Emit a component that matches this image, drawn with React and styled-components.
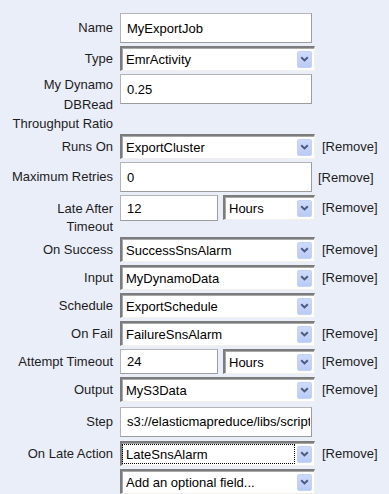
import styled, { createGlobalStyle } from 'styled-components';

const GlobalStyle = createGlobalStyle`
  html, body {
    margin: 0;
    padding: 0;
    background: #eaeef9;
  }
  body {
    font-family: 'Liberation Sans', Arial, sans-serif;
    font-size: 13px;
    color: #1c1c1c;
  }
`;

const Form = styled.div`
  width: 389px;
  height: 494px;
  box-sizing: border-box;
  padding-top: 13px;

  display: flex;
  flex-direction: column;
  gap: 3px;
  overflow: hidden;
`;

const Row = styled.div`
  display: flex;
  align-items: ${(p) => (p.$top ? 'flex-start' : 'center')};
  height: ${(p) => (p.$h ? `${p.$h}px` : 'auto')};
`;

const Label = styled.div`
  width: 113px;
  flex: none;
  box-sizing: border-box;
  text-align: right;
  line-height: ${(p) => p.$lh || 18}px;
  padding-top: ${(p) => p.$pt || 0}px;
`;

const Fields = styled.div`
  margin-left: 7px;
  display: flex;
  align-items: flex-start;
  gap: 5px;
`;

const TextInput = styled.input`
  width: ${(p) => p.$w}px;
  height: ${(p) => p.$hh || 30}px;
  box-sizing: border-box;
  margin: 0;
  padding: 0 1px 0 6px;

  border: 1px solid;
  border-color: #b4b4b4 #9c9c9c #9c9c9c #b4b4b4;
  background: #fff;

  font-family: 'Liberation Sans', Arial, sans-serif;
  font-size: 13px;
  color: #000;
  outline: none;
`;

const SelectBox = styled.div`
  width: ${(p) => p.$w}px;
  height: 25px;
  box-sizing: border-box;
  flex: none;

  display: flex;
  align-items: center;

  background: #fff;
  border-style: solid;
  border-width: 2px 1px 1px 2px;
  border-color: #7c7c7c #f1f0ea #f1f0ea #7c7c7c;
  box-shadow: inset 1px 1px 0 #a8a8a8;
`;

const Value = styled.div`
  flex: 1;
  height: 20px;
  box-sizing: border-box;
  margin-right: 2px;
  padding-left: 3px;

  display: flex;
  align-items: center;
  white-space: nowrap;
  overflow: hidden;

  color: #000;
  border: 1px dotted ${(p) => (p.$focused ? '#000' : 'transparent')};
`;

const ArrowButton = styled.div`
  width: 15px;
  height: 17px;
  box-sizing: border-box;
  margin-right: 2px;
  flex: none;

  display: flex;
  align-items: center;
  justify-content: center;

  background: linear-gradient(#cddafb, #b9cbf6);
  border: 1px solid #c3d2f6;
  border-radius: 2px;
`;

const Remove = styled.span`
  margin-left: ${(p) => p.$gap || 7}px;
  white-space: nowrap;
  color: #1c1c1c;
`;

function Chevron() {
  return (
    <svg width="9" height="6" viewBox="0 0 9 6">
      <path d="M1.2 1.2 L4.5 4.4 L7.8 1.2" fill="none" stroke="#4b5b7e" strokeWidth="2" />
    </svg>
  );
}

function Select({ value, w = 195, focused }) {
  return (
    <SelectBox $w={w}>
      <Value $focused={focused}>{value}</Value>
      <ArrowButton>
        <Chevron />
      </ArrowButton>
    </SelectBox>
  );
}

export default function App() {
  return (
    <>
      <GlobalStyle />
      <Form>
        <Row>
          <Label>Name</Label>
          <Fields>
            <TextInput $w={192} defaultValue="MyExportJob" />
          </Fields>
        </Row>

        <Row>
          <Label>Type</Label>
          <Fields>
            <Select value="EmrActivity" />
          </Fields>
        </Row>

        <Row $top $h={57}>
          <Label $lh={19.5} $pt={1}>
            My Dynamo DBRead Throughput Ratio
          </Label>
          <Fields>
            <TextInput $w={192} defaultValue="0.25" />
          </Fields>
        </Row>

        <Row>
          <Label>Runs On</Label>
          <Fields>
            <Select value="ExportCluster" />
          </Fields>
          <Remove>[Remove]</Remove>
        </Row>

        <Row>
          <Label>Maximum Retries</Label>
          <Fields>
            <TextInput $w={192} defaultValue="0" />
          </Fields>
          <Remove $gap={6}>[Remove]</Remove>
        </Row>

        <Row $top $h={39}>
          <Label $pt={5}>
            Late After
            <br />
            Timeout
          </Label>
          <Fields>
            <TextInput $w={98} $hh={26} defaultValue="12" />
            <Select w={92} value="Hours" />
          </Fields>
          <Remove $gap={7}>
            <RemoveLine>[Remove]</RemoveLine>
          </Remove>
        </Row>

        <Row>
          <Label>On Success</Label>
          <Fields>
            <Select value="SuccessSnsAlarm" />
          </Fields>
          <Remove>[Remove]</Remove>
        </Row>

        <Row>
          <Label>Input</Label>
          <Fields>
            <Select value="MyDynamoData" />
          </Fields>
          <Remove>[Remove]</Remove>
        </Row>

        <Row>
          <Label>Schedule</Label>
          <Fields>
            <Select value="ExportSchedule" />
          </Fields>
        </Row>

        <Row>
          <Label>On Fail</Label>
          <Fields>
            <Select value="FailureSnsAlarm" />
          </Fields>
          <Remove>[Remove]</Remove>
        </Row>

        <Row>
          <Label>Attempt Timeout</Label>
          <Fields>
            <TextInput $w={98} $hh={25} defaultValue="24" />
            <Select w={92} value="Hours" />
          </Fields>
          <Remove>[Remove]</Remove>
        </Row>

        <Row>
          <Label>Output</Label>
          <Fields>
            <Select value="MyS3Data" />
          </Fields>
          <Remove>[Remove]</Remove>
        </Row>

        <Row $h={33}>
          <Label>Step</Label>
          <Fields>
            <TextInput $w={192} defaultValue="s3://elasticmapreduce/libs/script-runner/script-runner.jar" />
          </Fields>
        </Row>

        <Row>
          <Label>On Late Action</Label>
          <Fields>
            <Select value="LateSnsAlarm" focused />
          </Fields>
          <Remove>[Remove]</Remove>
        </Row>

        <Row>
          <Label />
          <Fields>
            <Select value="Add an optional field..." />
          </Fields>
        </Row>
      </Form>
    </>
  );
}

const RemoveLine = styled.span`
  display: inline-block;
  line-height: 25px;
`;
